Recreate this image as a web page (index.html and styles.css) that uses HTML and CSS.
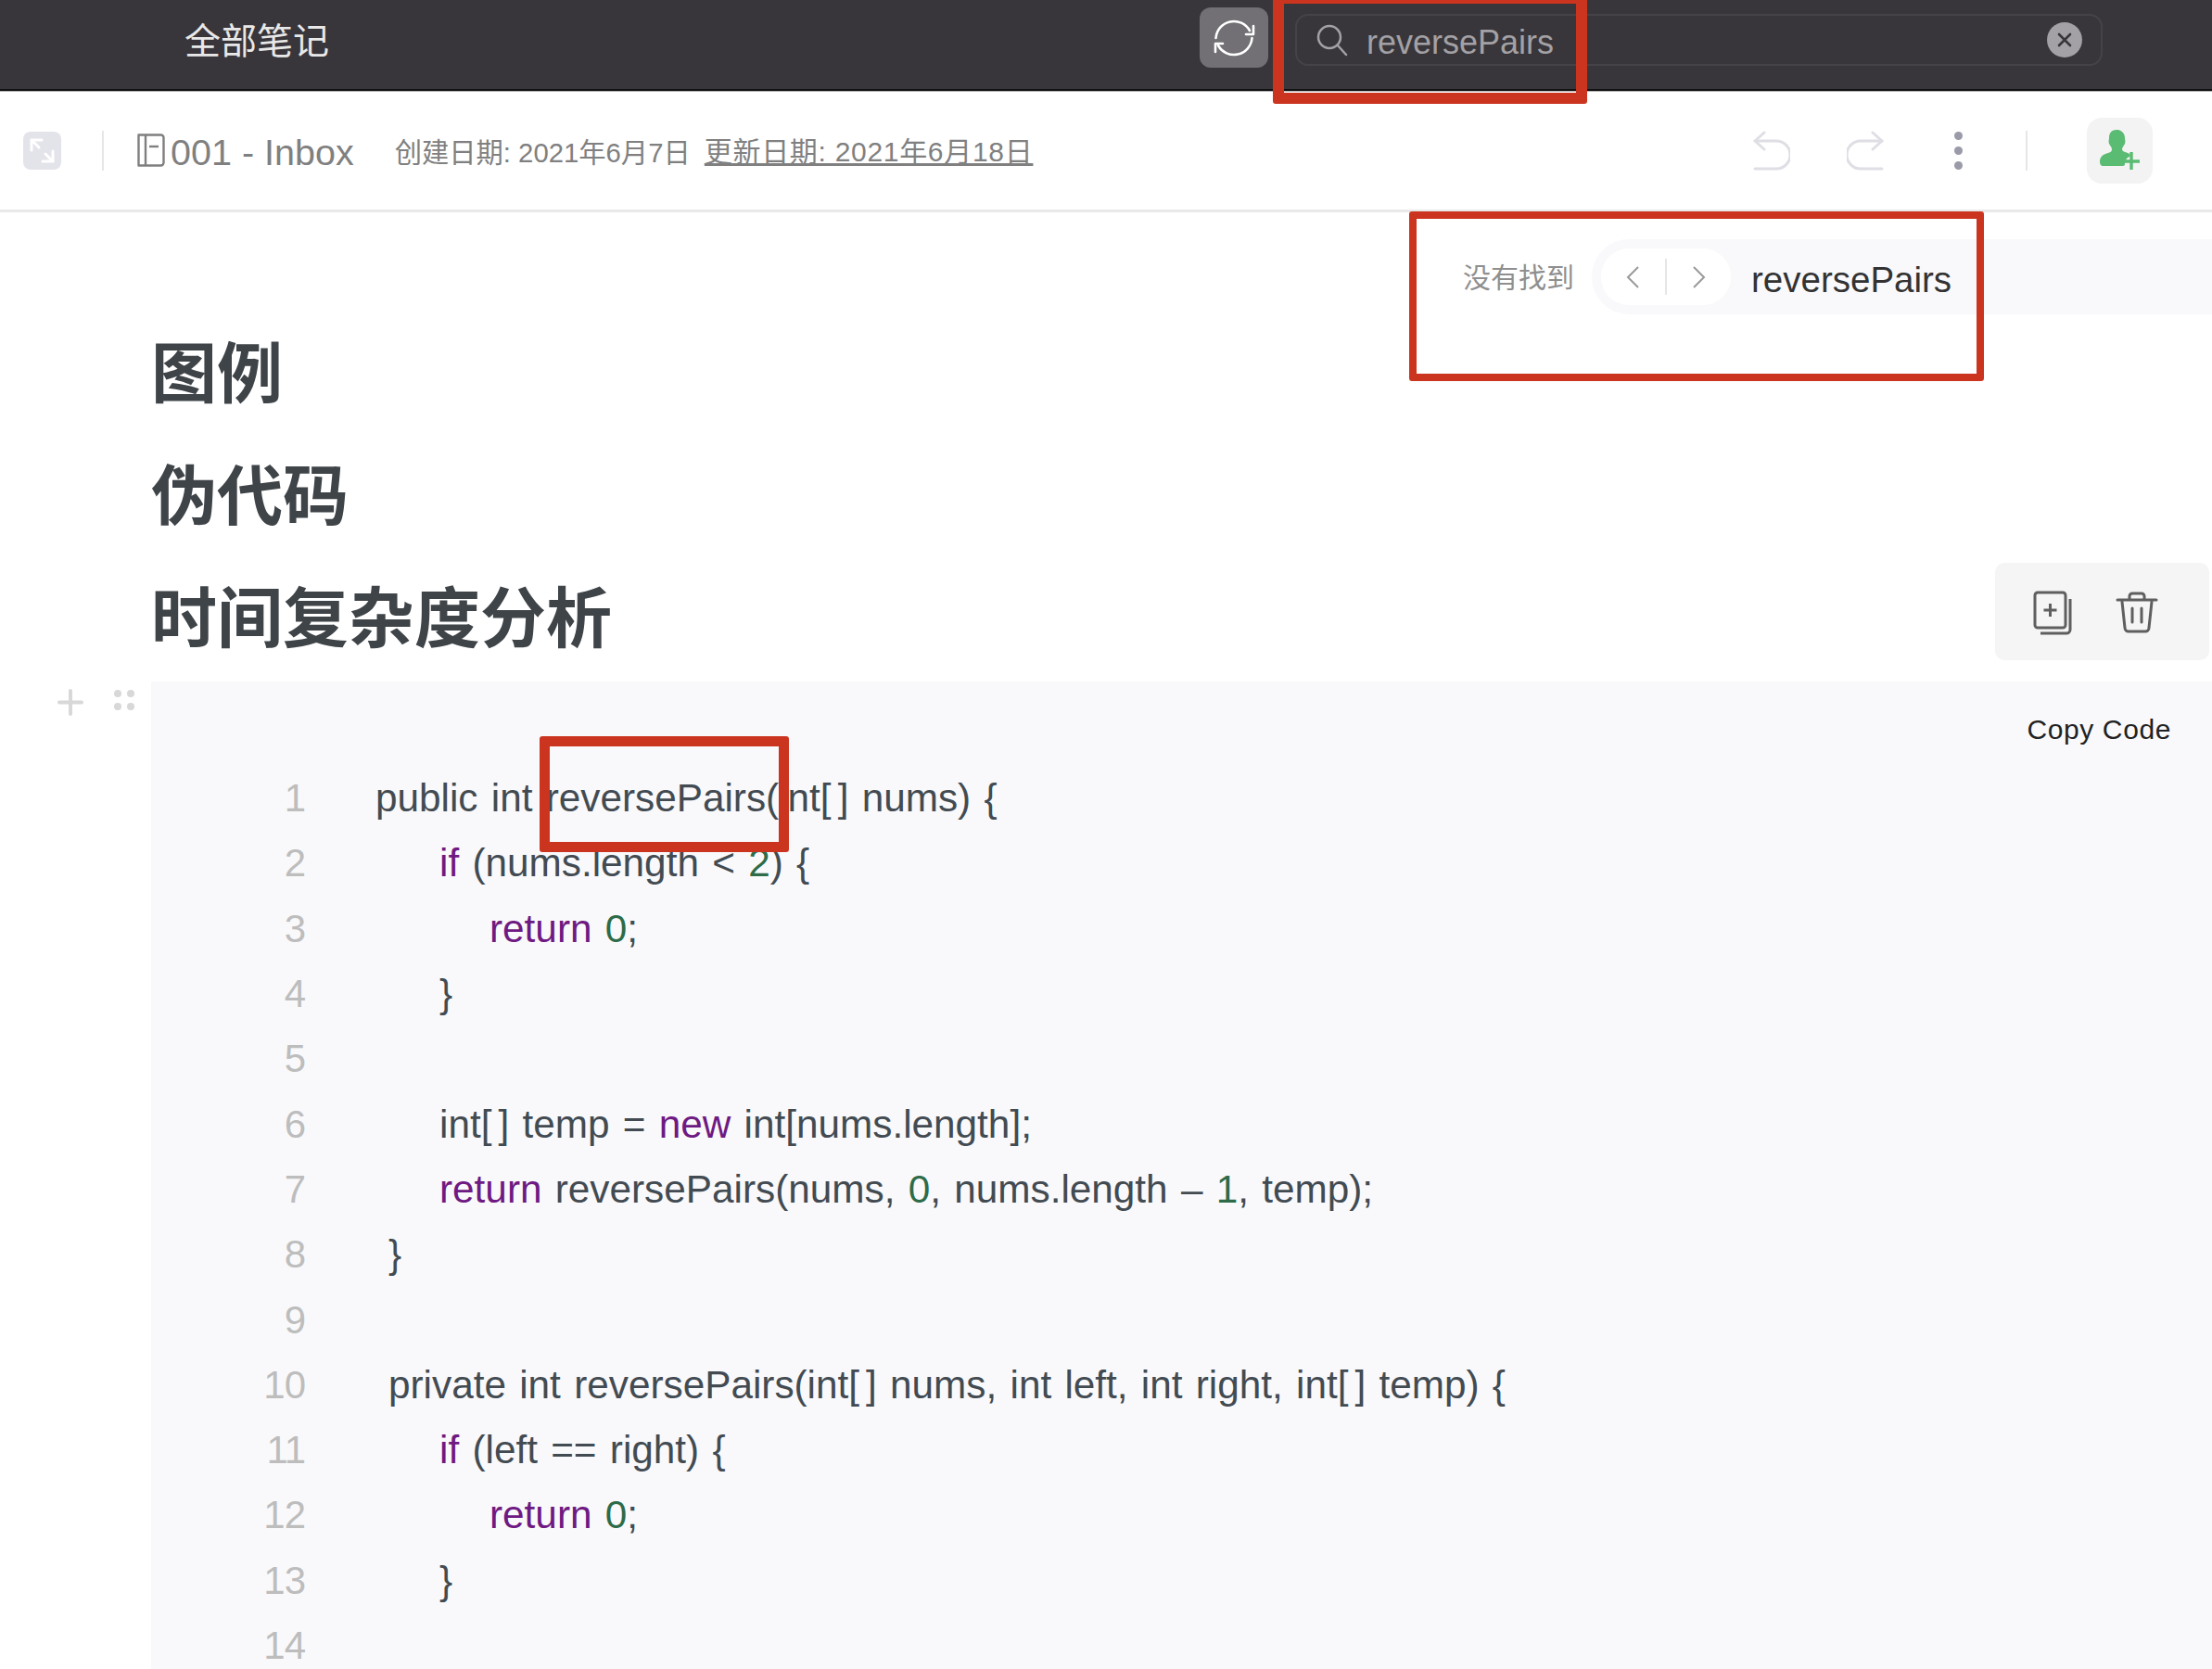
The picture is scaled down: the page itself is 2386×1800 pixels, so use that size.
FILE: index.html
```html
<!DOCTYPE html>
<html lang="zh-CN">
<head>
    <meta charset="UTF-8">
    <title>全部笔记</title>
    <link rel="stylesheet" href="styles.css">
</head>
<body>
    <header class="topbar">
        <div class="topbar-title">全部笔记</div>
        <button class="sync-btn">
            <svg width="50" height="50" viewBox="0 0 50 50" fill="none" stroke="#fff" stroke-width="2.6" stroke-linecap="round" stroke-linejoin="round">
                <path d="M5.500 25a19.500 19.500 0 0 1 36.500-8"/>
                <path d="M46 12v9h-8"/>
                <path d="M44.500 25a19.500 19.500 0 0 1-36.500 8"/>
                <path d="M5 40v-9h8"/>
            </svg>
        </button>
        <div class="search-box">
            <svg class="search-icon" width="36" height="36" viewBox="0 0 36 36" fill="none" stroke="#a3a1a5" stroke-width="2.5" stroke-linecap="round">
                <circle cx="15" cy="15" r="12"/>
                <path d="M24 24l9 10"/>
            </svg>
            <span class="search-text">reversePairs</span>
            <span class="search-clear">
                <svg width="20" height="20" viewBox="0 0 20 20" stroke="#38363a" stroke-width="2.6" stroke-linecap="round">
                    <path d="M4 4l12 12M16 4L4 16"/>
                </svg>
            </span>
        </div>
    </header>

    <div class="toolbar">
        <span class="expand-btn">
            <svg width="41" height="41" viewBox="0 0 41 41" fill="none" stroke="#fff" stroke-width="3" stroke-linecap="round" stroke-linejoin="round">
                <path d="M9 20V9h11"/>
                <path d="M9 9l8 8"/>
                <path d="M32 21v11H21"/>
                <path d="M32 32l-8-8"/>
            </svg>
        </span>
        <span class="vline vline-left"></span>
        <svg class="book-icon" width="30" height="36" viewBox="0 0 30 36" fill="none" stroke="#7f7f7f" stroke-width="2.4" stroke-linejoin="round">
            <path d="M1.500 1.500h24a3 3 0 0 1 3 3v27a3 3 0 0 1-3 3h-24z"/>
            <path d="M9 1.500v33"/>
            <path d="M13 14h10"/>
        </svg>
        <span class="note-name">001 - Inbox</span>
        <span class="meta meta-created">创建日期: 2021年6月7日</span>
        <span class="meta meta-updated">更新日期: 2021年6月18日</span>

        <div class="toolbar-right">
            <svg width="40" height="43" viewBox="0 0 40 43" fill="none" stroke="#dedee5" stroke-width="3" stroke-linecap="round" stroke-linejoin="round">
                <path d="M12 2L2 11l10 9"/>
                <path d="M2 11h23a14 14 0 0 1 0 30H2"/>
            </svg>
            <svg class="redo" width="40" height="43" viewBox="0 0 40 43" fill="none" stroke="#dedee5" stroke-width="3" stroke-linecap="round" stroke-linejoin="round">
                <path d="M28 2l10 9-10 9"/>
                <path d="M38 11H15a14 14 0 0 0 0 30h23"/>
            </svg>
            <span class="dots"><i></i><i></i><i></i></span>
            <span class="vline vline-right"></span>
            <span class="invite-btn">
                <svg width="44" height="44" viewBox="0 0 44 44">
                    <path fill="#5abb72" d="M18 0c6 0 9 4 9 9 0 2 1 3 0 6-1 2-3 4-3 6 0 2 3 3 6 4 3 1 3 3 2 4-3 1-5 4-5 8 0 1-1 2-2 2H4c-3 0-4-2-4-5 0-5 4-8 9-9 3-1 4-2 4-4s-2-4-3-6c-1-3 0-4 0-6 0-5 2-9 8-9z"/>
                    <path stroke="#5abb72" stroke-width="3.4" d="M34 24v19M25 34h18"/>
                </svg>
            </span>
        </div>
    </div>

    <main class="content">
        <h2>图例</h2>
        <h2>伪代码</h2>
        <h2>时间复杂度分析</h2>

        <div class="code-block">
            <div class="copy-row">Copy Code</div>
            <div class="code-line"><span class="ln">1</span><code>public int reversePairs(int<s>[</s>] nums) {</code></div>
            <div class="code-line"><span class="ln">2</span><code class="ind-2"><b>if</b> (nums.length &lt; <u>2</u>) {</code></div>
            <div class="code-line"><span class="ln">3</span><code class="ind-3"><b>return</b> <u>0</u>;</code></div>
            <div class="code-line"><span class="ln">4</span><code class="ind-2">}</code></div>
            <div class="code-line"><span class="ln">5</span><code></code></div>
            <div class="code-line"><span class="ln">6</span><code class="ind-2">int<s>[</s>] temp = <b>new</b> int[nums.length];</code></div>
            <div class="code-line"><span class="ln">7</span><code class="ind-2"><b>return</b> reversePairs(nums, <u>0</u>, nums.length – <u>1</u>, temp);</code></div>
            <div class="code-line"><span class="ln">8</span><code class="ind-1">}</code></div>
            <div class="code-line"><span class="ln">9</span><code></code></div>
            <div class="code-line"><span class="ln">10</span><code class="ind-1">private int reversePairs(int<s>[</s>] nums, int left, int right, int<s>[</s>] temp) {</code></div>
            <div class="code-line"><span class="ln">11</span><code class="ind-2"><b>if</b> (left == right) {</code></div>
            <div class="code-line"><span class="ln">12</span><code class="ind-3"><b>return</b> <u>0</u>;</code></div>
            <div class="code-line"><span class="ln">13</span><code class="ind-2">}</code></div>
            <div class="code-line"><span class="ln">14</span><code></code></div>
        </div>

        <div class="block-handle">
            <svg width="28" height="29" viewBox="0 0 28 29" stroke="#d8d8d8" stroke-width="4" stroke-linecap="round">
                <path d="M14 2v25M2 14.500h24"/>
            </svg>
            <svg width="26" height="24" viewBox="0 0 26 24" fill="#d8d8d8">
                <circle cx="6" cy="5" r="4"/>
                <circle cx="20" cy="5" r="4"/>
                <circle cx="6" cy="19" r="4"/>
                <circle cx="20" cy="19" r="4"/>
            </svg>
        </div>

        <div class="find-bar">
            <span class="find-status">没有找到</span>
            <div class="find-track">
                <span class="find-nav">
                    <svg width="16" height="26" viewBox="0 0 16 26" fill="none" stroke="#9a9a9a" stroke-width="2"><path d="M14 2L3 13l11 11"/></svg>
                    <i></i>
                    <svg width="16" height="26" viewBox="0 0 16 26" fill="none" stroke="#9a9a9a" stroke-width="2"><path d="M2 2l11 11L2 24"/></svg>
                </span>
                <span class="find-text">reversePairs</span>
            </div>
        </div>

        <div class="block-tools">
            <svg width="42" height="48" viewBox="0 0 42 48" fill="none" stroke="#5f5f5f" stroke-width="3" stroke-linejoin="round">
                <rect x="2" y="2" width="33" height="38" rx="3"/>
                <path d="M8 46h28a4 4 0 0 0 4-4V9"/>
                <path d="M18.500 14v14M11.500 21h14"/>
            </svg>
            <svg width="46" height="46" viewBox="0 0 46 46" fill="none" stroke="#5f5f5f" stroke-width="3" stroke-linecap="round" stroke-linejoin="round">
                <path d="M2 9h42"/>
                <path d="M15 8V5a3 3 0 0 1 3-3h10a3 3 0 0 1 3 3v3"/>
                <path d="M7 11l3 28a4 4 0 0 0 4 4h18a4 4 0 0 0 4-4l3-28"/>
                <path d="M18 18v15M28 18v15"/>
            </svg>
        </div>
    </main>

    <!-- red marks -->
    <div class="mark mark-search"></div>
    <div class="mark mark-find"></div>
    <div class="mark mark-code"></div>
</body>
</html>
```

FILE: styles.css
```css
html, body {
    margin: 0;
    height: 1800px;
    overflow: hidden;
    background: #fff;
}
body {
    position: relative;
    font-family: "Liberation Sans", "Noto Sans CJK SC", sans-serif;
}

/* top bar */
.topbar {
    box-sizing: border-box;
    height: 98px;
    padding: 8px 118px 0 199px;
    display: flex;
    align-items: flex-start;
    background: #38363a;
    border-bottom: 2px solid #111;
    box-shadow: 0 1px 0 #b5b5b5;
}
.topbar-title {
    margin-top: 14px;
    font-size: 39px;
    line-height: 46px;
    color: #e8e8e8;
}
.sync-btn {
    width: 74px;
    height: 65px;
    margin-left: auto;
    padding: 0;
    display: flex;
    align-items: center;
    justify-content: center;
    border: 0;
    border-radius: 12px;
    background: #727074;
}
.search-box {
    box-sizing: border-box;
    width: 871px;
    height: 56px;
    margin: 7px 0 0 29px;
    padding: 0 20px;
    display: flex;
    align-items: center;
    border: 2px solid #454347;
    border-radius: 14px;
}
.search-text {
    margin-left: 19px;
    padding-top: 6px;
    font-size: 36px;
    color: #a3a1a5;
}
.search-clear {
    width: 38px;
    height: 38px;
    margin-left: auto;
    display: flex;
    align-items: center;
    justify-content: center;
    border-radius: 50%;
    background: #a3a1a5;
}

/* note toolbar */
.toolbar {
    box-sizing: border-box;
    height: 131px;
    padding-left: 25px;
    padding-right: 64px;
    display: flex;
    align-items: center;
    border-bottom: 3px solid #e9e9e9;
}
.expand-btn {
    width: 41px;
    height: 41px;
    border-radius: 8px;
    background: #e3e3ea;
}
.vline {
    width: 2px;
    height: 43px;
    background: #e6e6e6;
}
.vline-left {
    margin-left: 44px;
}
.book-icon {
    margin-left: 36px;
}
.note-name {
    margin-left: 6px;
    padding-top: 4px;
    font-size: 39.500px;
    color: #808080;
}
.meta {
    color: #808080;
}
.meta-created {
    margin-left: 44px;
    font-size: 29.300px;
}
.meta-updated {
    margin-left: 15px;
    margin-bottom: 3px;
    font-size: 30px;
    letter-spacing: 0.7px;
    text-decoration: underline;
}
.toolbar-right {
    margin-left: auto;
    display: flex;
    align-items: center;
}
.redo {
    margin-left: 61px;
}
.dots {
    width: 10px;
    margin-left: 76px;
    display: flex;
    flex-direction: column;
    gap: 7px;
}
.dots i {
    width: 9px;
    height: 9px;
    border-radius: 50%;
    background: #9a9aa8;
}
.vline-right {
    margin-left: 67px;
}
.invite-btn {
    width: 71px;
    height: 71px;
    margin-left: 64px;
    display: flex;
    align-items: center;
    justify-content: center;
    border-radius: 16px;
    background: #f3f3f3;
}

/* note body */
.content {
    position: relative;
    padding: 109px 0 0 163px;
}
h2 {
    margin: 0;
    font-size: 71px;
    line-height: 132px;
    font-weight: 700;
    color: #3f4448;
}
.code-block {
    margin-top: 1px;
    background: #f9f9fb;
    height: 1100px;
}
.copy-row {
    box-sizing: border-box;
    height: 91px;
    padding: 34px 44px 0 0;
    text-align: right;
    font-size: 30px;
    line-height: 36px;
    letter-spacing: 0.6px;
    color: #222;
}
.code-line {
    height: 70.300px;
    display: flex;
    align-items: center;
    font-size: 42.300px;
    word-spacing: 2.500px;
    color: #434b52;
}
.ln {
    width: 166px;
    flex: none;
    text-align: right;
    font-size: 42px;
    color: #bdbdbd;
    letter-spacing: -1px;
}
code {
    margin-left: 76px;
    font-family: inherit;
    white-space: pre;
}
code b {
    font-weight: 400;
    color: #6f1a82;
}
code u {
    text-decoration: none;
    color: #2e6b48;
}
code s {
    text-decoration: none;
    letter-spacing: 7px;
}
.ind-1 { padding-left: 14px; }
.ind-2 { padding-left: 69px; }
.ind-3 { padding-left: 123px; }

/* things floating over the note */
.block-handle {
    position: absolute;
    top: 514px;
    left: 62px;
    display: flex;
    align-items: flex-start;
    gap: 31px;
}
.find-bar {
    position: absolute;
    top: 29px;
    right: 0;
    left: 1578px;
    display: flex;
    align-items: center;
    height: 81px;
}
.find-status {
    width: 139px;
    padding-bottom: 4px;
    font-size: 30px;
    color: #8f8f8f;
}
.find-track {
    flex: 1;
    height: 81px;
    padding-left: 10px;
    display: flex;
    align-items: center;
    border-radius: 40px 0 0 40px;
    background: #f9f9fb;
}
.find-nav {
    box-sizing: border-box;
    width: 140px;
    height: 61px;
    padding: 0 26px;
    display: flex;
    align-items: center;
    justify-content: space-between;
    border-radius: 30px;
    background: #fff;
}
.find-nav i {
    width: 2px;
    height: 39px;
    background: #e6e6e6;
}
.find-text {
    margin-left: 22px;
    padding-top: 6px;
    font-size: 38.500px;
    color: #333;
}
.block-tools {
    position: absolute;
    top: 378px;
    left: 2152px;
    width: 231px;
    height: 105px;
    box-sizing: border-box;
    padding: 2px 55px 0 41px;
    display: flex;
    align-items: center;
    justify-content: space-between;
    border-radius: 10px;
    background: #f5f5f6;
}

/* red marks drawn over the screenshot */
.mark {
    position: absolute;
    box-sizing: border-box;
    border: 0 solid #cb3520;
    border-radius: 3px;
}
.mark-search {
    top: -8px;
    left: 1373px;
    width: 339px;
    height: 120px;
    border-width: 12px;
}
.mark-find {
    top: 228px;
    left: 1520px;
    width: 620px;
    height: 183px;
    border-width: 8px;
}
.mark-code {
    top: 794px;
    left: 582px;
    width: 269px;
    height: 125px;
    border-width: 11px;
}
```
